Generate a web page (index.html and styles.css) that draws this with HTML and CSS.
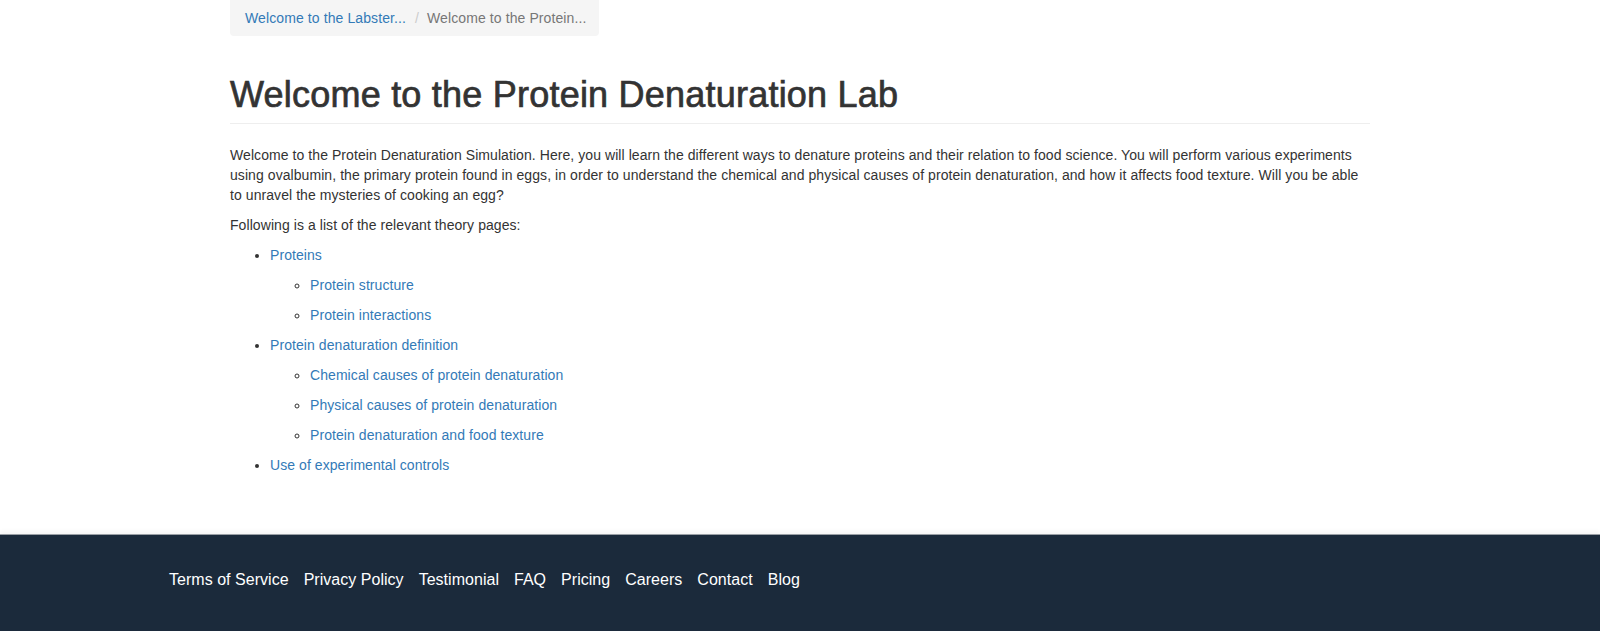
FILE: index.html
```html
<!DOCTYPE html>
<html lang="en">
<head>
<meta charset="utf-8">
<title>Welcome to the Protein Denaturation Lab</title>
<link rel="stylesheet" href="styles.css">
</head>
<body>
<main class="container">
  <ol class="breadcrumb">
    <li><a href="#">Welcome to the Labster...</a></li>
    <li class="active">Welcome to the Protein...</li>
  </ol>
  <div class="page-header">
    <h1>Welcome to the Protein Denaturation Lab</h1>
  </div>
  <div class="content">
    <p>Welcome to the Protein Denaturation Simulation. Here, you will learn the different ways to denature proteins and their relation to food science. You will perform various experiments using ovalbumin, the primary protein found in eggs, in order to understand the chemical and physical causes of protein denaturation, and how it affects food texture. Will you be able to unravel the mysteries of cooking an egg?</p>
    <p>Following is a list of the relevant theory pages:</p>
    <ul class="topics">
      <li><a href="#">Proteins</a>
        <ul>
          <li><a href="#">Protein structure</a></li>
          <li><a href="#">Protein interactions</a></li>
        </ul>
      </li>
      <li><a href="#">Protein denaturation definition</a>
        <ul>
          <li><a href="#">Chemical causes of protein denaturation</a></li>
          <li><a href="#">Physical causes of protein denaturation</a></li>
          <li><a href="#">Protein denaturation and food texture</a></li>
        </ul>
      </li>
      <li><a href="#">Use of experimental controls</a></li>
    </ul>
  </div>
</main>
<footer class="footer">
  <nav class="footer-inner">
    <a href="#">Terms of Service</a>
    <a href="#">Privacy Policy</a>
    <a href="#">Testimonial</a>
    <a href="#">FAQ</a>
    <a href="#">Pricing</a>
    <a href="#">Careers</a>
    <a href="#">Contact</a>
    <a href="#">Blog</a>
  </nav>
</footer>
</body>
</html>
```
FILE: styles.css
```css
* { box-sizing: border-box; }
html, body { margin: 0; padding: 0; }
body {
  font-family: "Liberation Sans", Arial, Helvetica, sans-serif;
  font-size: 14px;
  line-height: 20px;
  color: #333;
  background: #fff;
}
a { color: #337ab7; text-decoration: none; }

.container {
  width: 1170px;
  margin: 0 auto;
  padding: 0 15px 49px;
}

.breadcrumb {
  list-style: none;
  margin: 0;
  padding: 8px 15px;
  width: 369px;
  height: 36px;
  background: #f5f5f5;
  border-radius: 0 0 4px 4px;
  display: flex;
  white-space: nowrap;
  letter-spacing: 0.1px;
}
.breadcrumb li + li::before {
  content: "/";
  color: #ccc;
  padding: 0 8px 0 9px;
}
.breadcrumb .active { color: #777; }

.page-header {
  margin: 39px 0 20px;
  padding-bottom: 8px;
  border-bottom: 1px solid #eee;
}
.page-header h1 {
  margin: 0;
  font-size: 36px;
  line-height: 40px;
  font-weight: 400;
  letter-spacing: 0.22px;
  -webkit-text-stroke: 0.7px #333;
  color: #333;
}

.content {
  padding-top: 1px;
  letter-spacing: 0.07px;
}
p { margin: 0 0 10px; }

.topics {
  margin: 0 0 10px;
  padding-left: 40px;
  list-style: disc;
}
.topics li { margin-bottom: 10px; }
.topics ul {
  margin: 10px 0 0;
  padding-left: 40px;
  list-style: circle;
}

.footer {
  background: #1b2a3b;
  border-top: 1px solid #9a9fa5;
  box-shadow: 0 -3px 4px rgba(0, 0, 0, 0.04);
  height: 97px;
}
.footer-inner {
  max-width: 1292px;
  margin: 0 auto;
  padding: 35px 15px 0;
  display: flex;
  gap: 15px;
}
.footer-inner a {
  color: #fff;
  font-size: 16px;
  line-height: 20px;
  letter-spacing: 0.03px;
}
```
